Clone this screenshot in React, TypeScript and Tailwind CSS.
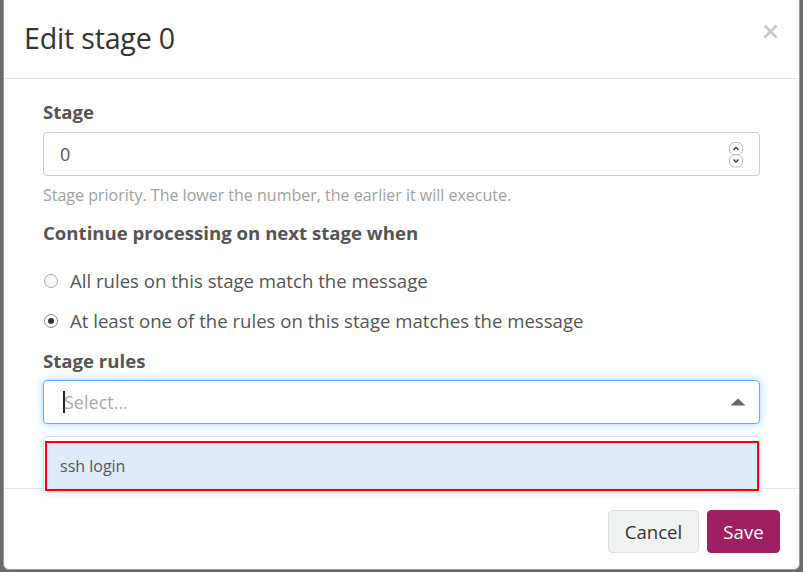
import React from "react";

export default function App() {
  const font = { fontFamily: '"Open Sans", "Noto Sans", sans-serif' };
  return (
    <div className="w-[803px] h-[572px] bg-[#6b6b6b] overflow-hidden relative" style={font}>
      <div className="absolute left-[3px] top-[-6px] w-[797px] h-[576px] bg-white rounded-[6px] border border-[#999] flex flex-col">
        {/* header */}
        <div className="h-[84px] shrink-0 border-b border-[#e5e5e5] flex items-center justify-between pl-[20px] pr-[21px] pt-[4px]">
          <h4 className="text-[28.6px] leading-[34px] text-[#333] tracking-[-0.2px] -mt-[1px]">Edit stage 0</h4>
          <svg width="15" height="15" viewBox="0 0 15 15" className="-mt-[14px]">
            <path d="M1.5 1.5 L13.5 13.5 M13.5 1.5 L1.5 13.5" stroke="#c8c8c8" strokeWidth="2.6" strokeLinecap="butt" />
          </svg>
        </div>
        {/* body */}
        <div className="relative px-[39px] pt-[20px] pb-[64px] text-[#555]">
          <label className="block text-[18.6px] leading-[25px] font-bold text-[#555]">Stage</label>
          <div className="mt-[8px] h-[44px] border border-[#ccc] rounded-[4px] flex items-center justify-between pl-[16px] pr-[15px]">
            <span className="text-[18px] text-[#555]">0</span>
            <svg width="16" height="28" viewBox="0 0 16 28" className="mt-[1px]">
              <rect x="1.5" y="1.5" width="13" height="12" rx="5" fill="white" stroke="#bbb" />
              <rect x="1.5" y="14" width="13" height="12" rx="5" fill="white" stroke="#bbb" />
              <path d="M5.5 9 L8 6.5 L10.5 9" fill="none" stroke="#333" strokeWidth="1.3" />
              <path d="M5.5 18.5 L8 21 L10.5 18.5" fill="none" stroke="#333" strokeWidth="1.3" />
            </svg>
          </div>
          <p className="mt-[8px] text-[16px] leading-[22px] text-[#a0a0a0]">
            Stage priority. The lower the number, the earlier it will execute.
          </p>
          <label className="block mt-[14px] text-[18.6px] leading-[25px] font-bold text-[#555]">
            Continue processing on next stage when
          </label>
          <div className="mt-[24px] flex items-center h-[24px]">
            <span className="w-[14px] h-[14px] rounded-full border border-[#aaa] bg-[#f8f8f8] mr-[12px] ml-[1px]" />
            <span className="text-[18.6px] leading-[24px] text-[#555]">All rules on this stage match the message</span>
          </div>
          <div className="mt-[16px] flex items-center h-[24px]">
            <span className="w-[14px] h-[14px] rounded-full border border-[#888] bg-white mr-[12px] ml-[1px] flex items-center justify-center">
              <span className="w-[6px] h-[6px] rounded-full bg-[#333]" />
            </span>
            <span className="text-[18.6px] leading-[24px] text-[#555]">At least one of the rules on this stage matches the message</span>
          </div>
          <label className="block mt-[15px] text-[18.6px] leading-[25px] font-bold text-[#555]">Stage rules</label>
          <div className="mt-[7px] h-[44px] border border-[#66afe9] rounded-[4px] shadow-[0_0_8px_rgba(102,175,233,0.6)] flex items-center justify-between pl-[19px] pr-[13px]">
            <span className="flex items-center">
              <span className="w-[2px] h-[22px] bg-[#222]" />
              <span className="text-[18px] text-[#aaa] -ml-[1px]">Select...</span>
            </span>
            <svg width="16" height="8" viewBox="0 0 16 8">
              <path d="M0.5 7.5 L8 0.5 L15.5 7.5 Z" fill="#666" />
            </svg>
          </div>
          {/* dropdown menu */}
          <div className="absolute left-[39px] right-[39px] top-[357px] z-10 bg-white border border-[#cfe0f2] rounded-[4px] shadow-[0_2px_6px_rgba(102,175,233,0.35)] pt-[4px] pl-[1px]">
            <div className="h-[50px] border-2 border-[#ff0000] bg-[#deebfb] flex items-center pl-[13px] -mb-[1px]">
              <span className="text-[16px] text-[#555]">ssh login</span>
            </div>
          </div>
        </div>
        {/* footer */}
        <div className="border-t border-[#e5e5e5] flex justify-end gap-[8px] pt-[21px] pr-[19px]">
          <button className="h-[43px] w-[91px] rounded-[4px] border border-[#ddd] bg-[#f0f1f1] text-[18.6px] text-[#333]">Cancel</button>
          <button className="h-[43px] w-[73px] rounded-[4px] border border-[#a01f62] bg-[#a01f62] text-[18.6px] text-white">Save</button>
        </div>
      </div>
    </div>
  );
}
